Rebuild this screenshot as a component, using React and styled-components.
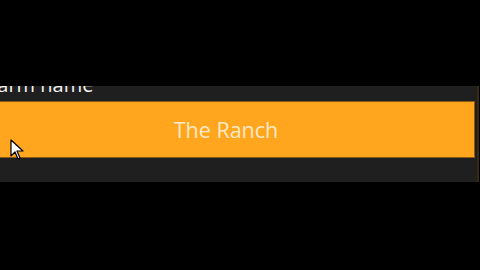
import React from "react";
import styled, { createGlobalStyle } from "styled-components";

const GlobalStyle = createGlobalStyle`
  html, body {
    margin: 0;
    padding: 0;
    background: #000;
    width: 480px;
    height: 270px;
    overflow: hidden;
    font-family: "Open Sans", "Noto Sans", sans-serif;
  }
`;

const Screen = styled.div`
  position: relative;
  width: 480px;
  height: 270px;
  padding-top: 86px;
  box-sizing: border-box;
`;

const Panel = styled.div`
  width: 477px;
  height: 96px;
  background: #1f1f1f;
  overflow: hidden;
  border-right: 2px solid #3a2a10;
`;

const Label = styled.div`
  margin: -13px 0 0 -13px;
  height: 28px;
  color: #f2f2f2;
  font-size: 20px;
  line-height: 24px;
  white-space: nowrap;
`;

const NameField = styled.div`
  display: flex;
  align-items: center;
  justify-content: center;
  margin-left: -20px;
  width: 495px;
  height: 57px;
  box-sizing: border-box;
  background: #ffa61e;
  border: 1px solid #8a5a14;
  color: #fde9c4;
  font-size: 21.5px;
  padding-right: 3px;
`;

const Cursor = styled.svg`
  position: absolute;
  left: 10px;
  top: 139px;
`;

export default function App() {
  return (
    <Screen>
      <GlobalStyle />
      <Panel>
        <Label>Farm name</Label>
        <NameField>The Ranch</NameField>
      </Panel>
      <Cursor width="16" height="22" viewBox="0 0 16 22">
        <path d="M1 1 L1 17 L5 13 L8 20 L10 19 L7 12 L13 12 Z" fill="#fff" stroke="#000" strokeWidth="1.2" strokeLinejoin="round" />
      </Cursor>
    </Screen>
  );
}
